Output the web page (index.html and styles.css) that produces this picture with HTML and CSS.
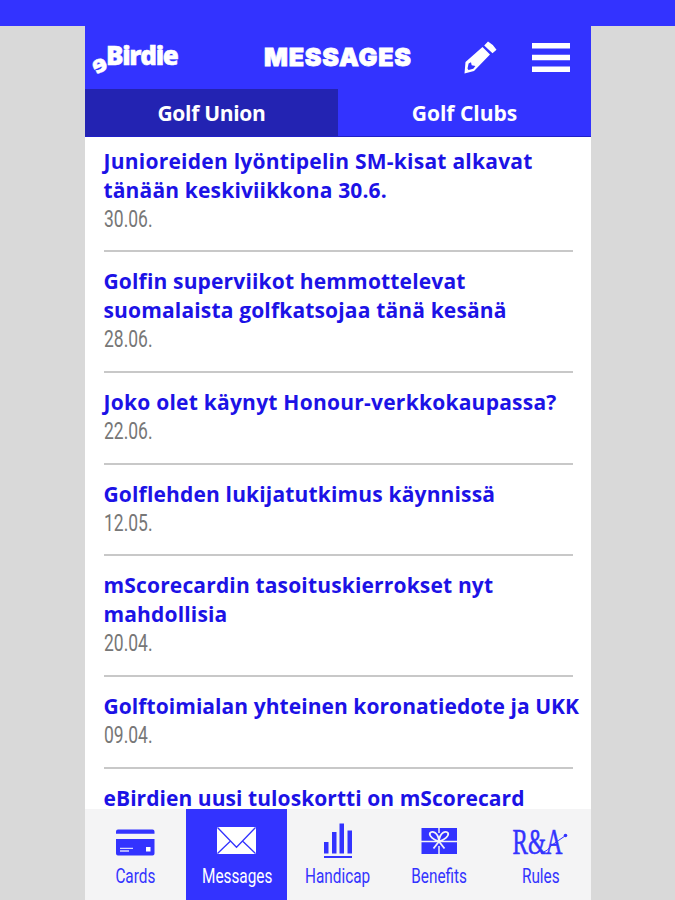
FILE: index.html
```html
<!DOCTYPE html>
<html lang="fi">
<head>
    <meta charset="UTF-8">
    <meta name="viewport" content="width=device-width, initial-scale=1.0">
    <title>eBirdie - Messages</title>
    <link rel="stylesheet" href="styles.css">
</head>
<body>
    <div class="top-band"></div>

    <div class="phone">
        <header class="header">
            <div class="logo"><span class="logo-e">e</span><span class="logo-text">Birdie</span></div>
            <h1>MESSAGES</h1>
            <svg class="icon-edit" width="34" height="34" viewBox="0 0 34 34">
                <path fill="#fff" d="M1.500 32.500 L2.500 21 L19.500 6 L27 13.500 L11 30 Z M21.200 4.500 L25 .5 Q30.500 3.500 33.500 8.800 L29.500 12.300 Z"/>
                <path fill="#3333ff" d="M4.500 27.500 L5.600 22.500 L8 21.200 L8.700 24.200 L12.400 25 L10.300 27.800 L5.500 29 Z"/>
            </svg>
            <svg class="icon-menu" width="38" height="29" viewBox="0 0 38 29">
                <path fill="#fff" d="M0 0h38v5.500H0zM0 11.700h38v5.500H0zM0 23.400h38v5.500H0z"/>
            </svg>
        </header>

        <nav class="tabs">
            <a class="tab active">Golf Union</a>
            <a class="tab">Golf Clubs</a>
        </nav>

        <main class="messages">
            <article class="message">
                <h2><span class="wide">Junioreiden lyöntipelin SM-kisat alkavat</span><br>tänään keskiviikkona 30.6.</h2>
                <time>30.06.</time>
            </article>
            <article class="message">
                <h2>Golfin superviikot hemmottelevat<br>suomalaista golfkatsojaa tänä kesänä</h2>
                <time>28.06.</time>
            </article>
            <article class="message">
                <h2><span class="wide">Joko olet käynyt Honour-verkkokaupassa?</span></h2>
                <time>22.06.</time>
            </article>
            <article class="message">
                <h2>Golflehden lukijatutkimus käynnissä</h2>
                <time>12.05.</time>
            </article>
            <article class="message">
                <h2>mScorecardin tasoituskierrokset nyt<br>mahdollisia</h2>
                <time>20.04.</time>
            </article>
            <article class="message">
                <h2><span class="tight">Golftoimialan yhteinen koronatiedote ja UKK</span></h2>
                <time>09.04.</time>
            </article>
            <article class="message">
                <h2><span class="tight">eBirdien uusi tuloskortti on mScorecard</span></h2>
            </article>
        </main>

        <nav class="bottom-nav">
            <a class="nav-item">
                <svg width="60" height="40" viewBox="0 0 60 40">
                    <path fill="#3333ff" d="M10 11.500q0-2 2-2h34.500q2 0 2 2v2.200H10zM10 19h38.500v14.500q0 2-2 2H12q-2 0-2-2z"/>
                    <path fill="none" stroke="#d8d8ff" stroke-width="1.300" d="M14 28.300h13M14 31h9"/>
                    <path fill="#fff" d="M40 27h4.500v4.500H40z"/>
                </svg>
                <span class="label">Cards</span>
            </a>
            <a class="nav-item active">
                <svg width="60" height="40" viewBox="0 0 60 40">
                    <rect x="10" y="7" width="39" height="27" rx="1" fill="#fff"/>
                    <path fill="none" stroke="#3333ff" stroke-width="1.300" d="M10.500 7.500L29.500 27.300L48.500 7.500M10.500 33.500L23.500 21M48.500 33.500L35.500 21"/>
                </svg>
                <span class="label">Messages</span>
            </a>
            <a class="nav-item">
                <svg width="60" height="40" viewBox="0 0 60 40">
                    <path fill="#3333ff" d="M16 22h4.500v11.500H16zM24 12h4.500v21.500H24zM31.500 3.500H36v30h-4.500zM39.500 10.500H44v23h-4.500zM16 36h28v2H16z"/>
                </svg>
                <span class="label">Handicap</span>
            </a>
            <a class="nav-item">
                <svg width="60" height="40" viewBox="0 0 60 40">
                    <rect x="12.500" y="8" width="35.500" height="26" fill="#3333ff"/>
                    <path fill="none" stroke="#f4f4f6" stroke-width="1.500" d="M12 21.500h36.500M30 7.500v5.500M30 26v8.500"/>
                    <path fill="none" stroke="#f4f4f6" stroke-width="1.800" d="M30 21.500C25 20 19.500 16 21 13C23 10 29.500 12.500 30 21.500C30.500 12.500 37 10 39 13C40.500 16 35 20 30 21.500L24.500 28.500M30 21.500L35.500 28.500"/>
                </svg>
                <span class="label">Benefits</span>
            </a>
            <a class="nav-item">
                <svg width="60" height="40" viewBox="0 0 60 40">
                    <text class="ra" x="2.500" y="33.500" textLength="50" lengthAdjust="spacingAndGlyphs">R&amp;A</text>
                    <path fill="none" stroke="#3333ff" stroke-width="1" d="M31 33.500Q38 31 42 25Q49 20 55 16"/>
                    <circle cx="55.500" cy="15.500" r="1.800" fill="#3333ff"/>
                </svg>
                <span class="label">Rules</span>
            </a>
        </nav>
    </div>
</body>
</html>
```

FILE: styles.css
```css
body {
    margin: 0;
    height: 900px;
    overflow: hidden;
    background: #d9d9d9;
    font-family: "Open Sans", "Noto Sans", sans-serif;
}

.top-band {
    height: 26px;
    background: #3333ff;
}

.phone {
    display: flex;
    flex-direction: column;
    width: 506px;
    height: 874px;
    margin-left: 85px;
    background: #fff;
}

.header {
    display: flex;
    flex-shrink: 0;
    align-items: center;
    height: 63px;
    background: #3333ff;
    color: #fff;
}

.logo {
    display: flex;
    width: 179px;
    padding-left: 9px;
    box-sizing: border-box;
    font-size: 26px;
    font-weight: 800;
    line-height: 30px;
}

.logo-e {
    width: 12px;
    font-size: 24px;
    transform: translateY(5px) rotate(-25deg) scaleX(-1);
    -webkit-text-stroke: 0.4px #fff;
}

.logo-text {
    letter-spacing: -1.3px;
    transform: translateY(-3px);
    -webkit-text-stroke: 0.5px #fff;
}

.header h1 {
    width: 199px;
    margin: 0;
    padding-bottom: 2px;
    font-family: Inter, sans-serif;
    font-size: 25px;
    font-weight: 900;
    letter-spacing: 0.8px;
    line-height: 30px;
    -webkit-text-stroke: 0.8px #fff;
}

.icon-edit {
    margin-right: 35px;
}

.tabs {
    display: flex;
    flex-shrink: 0;
    height: 48px;
    background: #3333ff;
    border-bottom: 1px solid #2020c8;
    box-sizing: border-box;
}

.tab {
    flex: 1;
    color: #fff;
    font-size: 21px;
    font-weight: 700;
    line-height: 48px;
    text-align: center;
}

.tab.active {
    background: #2323b2;
    letter-spacing: -0.3px;
}

.messages {
    flex: 1;
    min-height: 0;
    overflow: hidden;
    padding: 9.5px 0 0 18.5px;
}

.message {
    width: 469px;
    margin-bottom: 15px;
    padding-bottom: 16.7px;
    border-bottom: 2px solid #c8c8c8;
    white-space: nowrap;
}

.message h2 {
    margin: 0;
    color: #1c12e6;
    font-size: 21px;
    font-weight: 700;
    letter-spacing: 0.16px;
    line-height: 29px;
}

.message .wide {
    letter-spacing: 0.24px;
}

.message .tight {
    letter-spacing: 0.06px;
}

.message time {
    display: block;
    color: #777;
    font-family: Roboto, sans-serif;
    font-size: 23px;
    font-weight: 400;
    line-height: 30px;
    margin-bottom: -1px;
    transform: scaleX(0.76);
    transform-origin: left;
}

.bottom-nav {
    display: flex;
    flex-shrink: 0;
    height: 91px;
    background: #f4f4f5;
}

.nav-item {
    display: flex;
    flex: 1;
    flex-direction: column;
    align-items: center;
    padding-top: 11px;
    color: #3333ff;
}

.nav-item.active {
    background: #3333ff;
    color: #fff;
}

.label {
    font-family: Roboto, sans-serif;
    font-size: 21px;
    line-height: 32px;
    transform: scaleX(0.73);
}

.ra {
    fill: #3333ff;
    stroke: #3333ff;
    stroke-width: 0.6px;
    font-family: "Liberation Serif", serif;
    font-size: 36px;
}
```
